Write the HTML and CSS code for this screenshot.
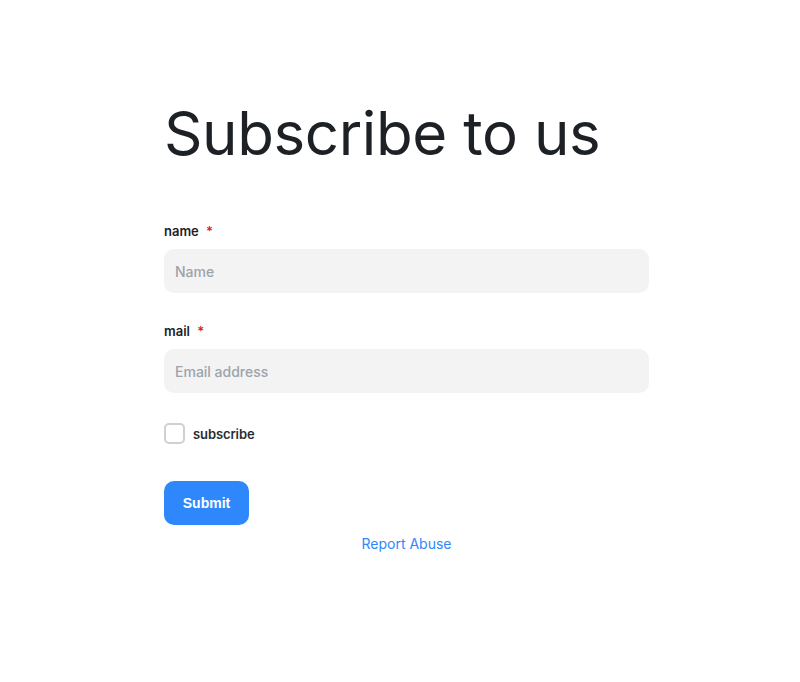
FILE: index.html
```html
<!DOCTYPE html>
<html>
<head>
<meta charset="utf-8">
<link rel="stylesheet" href="styles.css">
</head>
<body>
<div class="page">
  <h1 class="title">Subscribe to us</h1>
  <form class="form">
    <div class="field">
      <label class="label">name <span class="req">*</span></label>
      <input class="input" type="text" placeholder="Name">
    </div>
    <div class="field">
      <label class="label">mail <span class="req">*</span></label>
      <input class="input" type="email" placeholder="Email address">
    </div>
    <label class="check">
      <span class="box"></span>
      <span class="check-text">subscribe</span>
    </label>
    <button class="submit" type="button">Submit</button>
  </form>
  <div class="report"><a href="#">Report Abuse</a></div>
</div>
</body>
</html>
```
FILE: styles.css
```css
* { box-sizing: border-box; }
body {
  margin: 0;
  background: #fff;
  font-family: Inter, "Noto Sans", sans-serif;
  color: #1d2125;
}
.page {
  margin-left: 164px;
  width: 485px;
  padding-top: 97px;
}
.title {
  margin: 0;
  font-size: 60px;
  font-weight: 400;
  line-height: 72px;
  letter-spacing: -0.4px;
  color: #1d2125;
}
.form {
  margin-top: 54px;
  display: flex;
  flex-direction: column;
}
.field {
  display: flex;
  flex-direction: column;
  margin-bottom: 30px;
}
.label {
  font-size: 13px;
  font-weight: 600;
  line-height: 16px;
  margin-bottom: 10px;
  color: #1d2125;
}
.req {
  color: #d0262c;
  margin-left: 4px;
}
.input {
  height: 44px;
  border: none;
  border-radius: 10px;
  background: #f3f3f4;
  padding: 0 11px;
  font-family: Inter, sans-serif;
  font-size: 14px;
  font-weight: 500;
  outline: none;
}
.input::placeholder { color: #9ca3ab; }
.check {
  display: flex;
  align-items: center;
  gap: 8px;
  margin-top: 0;
}
.box {
  width: 21px;
  height: 21px;
  border: 2px solid #cfd0d2;
  border-radius: 5px;
}
.check-text {
  font-size: 13px;
  font-weight: 600;
  letter-spacing: -0.1px;
  color: #2a2d30;
}
.submit {
  margin-top: 37px;
  width: 85px;
  height: 44px;
  border: none;
  border-radius: 10px;
  background: #2e88fb;
  color: #fff;
  font-family: "Liberation Sans", Arial, sans-serif;
  font-size: 14px;
  font-weight: 700;
}
.report {
  text-align: center;
  margin-top: 9px;
  font-size: 14px;
  line-height: 20px;
}
.report a {
  color: #2e88fb;
  text-decoration: none;
}
```
